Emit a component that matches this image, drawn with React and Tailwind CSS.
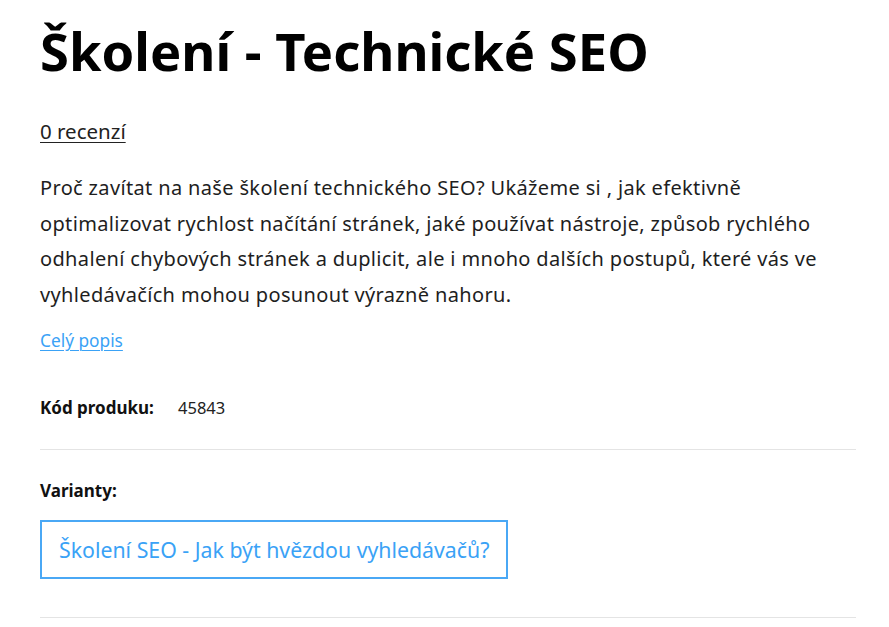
export default function App() {
  return (
    <div className="min-h-[627px] bg-white px-[40px] font-['Noto_Sans',sans-serif] text-[#1a1a1a]">
      <div className="w-[816px]">
        <h1 className="pt-[20px] text-[52.5px] font-bold leading-[62px] text-black">
          Školení - Technické SEO
        </h1>
        <a href="#" className="mt-[35px] block w-fit text-[20.5px] leading-[28px] text-[#222] underline underline-offset-[3px] decoration-1">
          0 recenzí
        </a>
        <p className="mt-[25px] text-[20px] leading-[35.5px] tracking-[0.35px] text-[#1e1e1e]">
          Proč zavítat na naše školení technického SEO? Ukážeme si , jak efektivně optimalizovat rychlost načítání stránek, jaké používat nástroje, způsob rychlého odhalení chybových stránek a duplicit, ale i mnoho dalších postupů, které vás ve vyhledávačích mohou posunout výrazně nahoru.
        </p>
        <a href="#" className="mt-[16px] block w-fit text-[17.3px] leading-[26px] text-[#3aa2f6] underline underline-offset-[3px] decoration-1">
          Celý popis
        </a>
        <div className="mt-[42px] flex items-center pb-[29px] text-[17px] leading-[24px] border-b border-[#e4e4e4]">
          <span className="w-[138px] font-bold text-[#111]">Kód produku:</span>
          <span className="text-[16.5px] text-[#222]">45843</span>
        </div>
        <div className="pt-[29px] pb-[38px] border-b border-[#e4e4e4]">
          <div className="text-[17px] font-bold leading-[24px] text-[#111]">Varianty:</div>
          <button className="mt-[17px] flex h-[59px] w-[468px] items-center justify-start whitespace-nowrap border-2 border-[#4aa8f5] bg-white px-[17px] text-left text-[21.3px] leading-[28px] text-[#3aa2f6]">
            Školení SEO - Jak být hvězdou vyhledávačů?
          </button>
        </div>
      </div>
    </div>
  );
}
